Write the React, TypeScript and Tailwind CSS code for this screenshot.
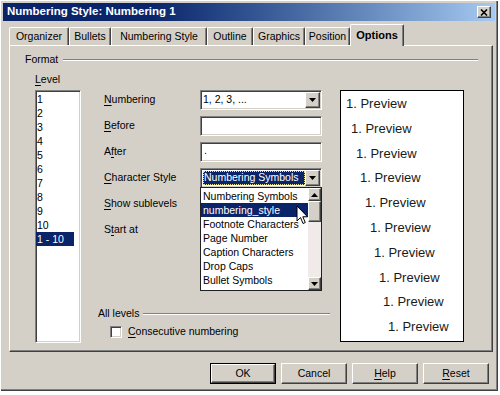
type MnProps = { a?: string; u: string; b?: string };

function Mn({ a = "", u, b = "" }: MnProps) {
  return (
    <span className="whitespace-nowrap">
      {a}
      <span className="underline underline-offset-[2px]">{u}</span>
      {b}
    </span>
  );
}

const raised =
  "bg-[#d4d0c8] border border-t-white border-l-white border-r-[#404040] border-b-[#404040] shadow-[inset_-1px_-1px_0_#808080]";
const sunken =
  "bg-white border border-t-[#808080] border-l-[#808080] border-r-white border-b-white shadow-[inset_1px_1px_0_#404040,inset_-1px_-1px_0_#d4d0c8]";

function DownTri() {
  return (
    <svg width="7" height="4" viewBox="0 0 7 4">
      <path d="M0 0h7L3.5 4z" fill="#000" />
    </svg>
  );
}

function UpTri() {
  return (
    <svg width="7" height="4" viewBox="0 0 7 4">
      <path d="M0 4h7L3.5 0z" fill="#000" />
    </svg>
  );
}

const tabs = [
  { label: "Organizer", w: "w-[60px]" },
  { label: "Bullets", w: "w-[42px]" },
  { label: "Numbering Style", w: "w-[96px]" },
  { label: "Outline", w: "w-[46px]" },
  { label: "Graphics", w: "w-[52px]" },
  { label: "Position", w: "w-[45px]" },
];

const levels = ["1", "2", "3", "4", "5", "6", "7", "8", "9", "10"];

const previewIndent = [
  "pl-[5px]",
  "pl-[10px]",
  "pl-[15px]",
  "pl-[19px]",
  "pl-[24px]",
  "pl-[29px]",
  "pl-[33px]",
  "pl-[38px]",
  "pl-[42px]",
  "pl-[47px]",
];

const charStyles = [
  "Numbering Symbols",
  "numbering_style",
  "Footnote Characters",
  "Page Number",
  "Caption Characters",
  "Drop Caps",
  "Bullet Symbols",
];

function Combo({ children }: { children: React.ReactNode }) {
  return (
    <div className={`w-[122px] h-[20px] flex items-center ${sunken}`}>
      <div className="flex-1 h-full flex items-center pl-[2px] overflow-hidden">{children}</div>
      <div className={`w-[15px] h-[16px] mr-[1px] flex items-center justify-center ${raised}`}>
        <DownTri />
      </div>
    </div>
  );
}

function Field({ children }: { children?: React.ReactNode }) {
  return <div className={`w-[122px] h-[20px] flex items-end pl-[3px] pb-[2px] ${sunken}`}>{children}</div>;
}

function Cursor() {
  return (
    <svg width="13" height="21" viewBox="0 0 13 21" className="absolute left-[95px] top-[17px]">
      <path
        d="M1 1 L1 16 L4.5 12.5 L7 18.5 L9.3 17.5 L6.8 11.8 L11.5 11.8 Z"
        fill="#fff"
        stroke="#000"
        strokeWidth="1"
        strokeLinejoin="miter"
      />
    </svg>
  );
}

export default function App() {
  return (
    <div className="w-[500px] h-[395px] bg-white font-['Liberation_Sans',Arial,sans-serif] text-[10.5px] text-black">
      <div className="w-[498px] h-[391px] bg-[#d4d0c8] flex flex-col shadow-[inset_1px_1px_0_#ffffff,inset_-1px_-1px_0_#404040,inset_-2px_-2px_0_#808080]">
        {/* title bar */}
        <div className="mx-[3px] mt-[3px] h-[18px] flex items-center bg-linear-to-r from-[#0a246a] from-30% to-[#a6caf0] pl-[4px] pr-[4px]">
          <span className="flex-1 text-white font-bold text-[11.5px]">Numbering Style: Numbering 1</span>
          <div className={`w-[14px] h-[12px] flex items-center justify-center ${raised}`}>
            <svg width="8" height="7" viewBox="0 0 8 7">
              <path d="M1 0.5 L7 6.5 M7 0.5 L1 6.5" stroke="#000" strokeWidth="1.6" />
            </svg>
          </div>
        </div>

        {/* tabs */}
        <div className="ml-[9px] mt-[3px] h-[21px] flex items-end">
          {tabs.map((t) => (
            <div
              key={t.label}
              className={`${t.w} h-[18px] flex items-center justify-center border-t border-l border-r border-t-white border-l-white border-r-[#404040] rounded-t-[2px] shadow-[inset_-1px_0_0_#808080]`}
            >
              {t.label}
            </div>
          ))}
          <div className="w-[54px] h-[22px] -mb-px relative z-10 bg-[#d4d0c8] flex items-center justify-center font-bold text-[11px] border-t border-l border-r border-t-white border-l-white border-r-[#404040] rounded-t-[2px] shadow-[inset_-1px_0_0_#808080]">
            Options
          </div>
        </div>

        {/* panel */}
        <div className="ml-[9px] w-[484px] h-[307px] flex flex-col border border-t-white border-l-white border-r-[#404040] border-b-[#404040] shadow-[inset_-1px_-1px_0_#808080]">
          <div className="mt-[7px] h-[14px] flex items-center pl-[15px] pr-[14px]">
            <span>Format</span>
            <div className="flex-1 ml-[5px] border-t border-t-[#808080] border-b border-b-white" />
          </div>

          <div className="flex">
            {/* level column */}
            <div className="ml-[25px] w-[46px] flex flex-col">
              <div className="mt-[6px] h-[14px] flex items-center">
                <Mn u="L" b="evel" />
              </div>
              <div className={`mt-[3px] h-[253px] pt-[1px] ${sunken}`}>
                {levels.map((l) => (
                  <div key={l} className="h-[14px] leading-[14px] pl-[1px]">
                    {l}
                  </div>
                ))}
                <div className="h-[14px] leading-[14px] pl-[1px] w-[38px] bg-[#0a246a] text-white">1 - 10</div>
              </div>
            </div>

            {/* settings column */}
            <div className="ml-[17px] w-[232px] pt-[20px] flex flex-col">
              <div className="h-[26px] flex items-center pl-[6px]">
                <div className="w-[96px]">
                  <Mn u="N" b="umbering" />
                </div>
                <Combo>1, 2, 3, ...</Combo>
              </div>
              <div className="h-[26px] flex items-center pl-[6px]">
                <div className="w-[96px]">
                  <Mn u="B" b="efore" />
                </div>
                <Field />
              </div>
              <div className="h-[26px] flex items-center pl-[6px]">
                <div className="w-[96px]">
                  <Mn a="A" u="f" b="ter" />
                </div>
                <Field>.</Field>
              </div>
              <div className="h-[26px] flex items-center pl-[6px]">
                <div className="w-[96px]">
                  <Mn u="C" b="haracter Style" />
                </div>
                <div className="relative">
                  <Combo>
                    <div className="w-full h-[14px] flex items-center bg-[#0a246a] text-white pl-[1px] outline-1 outline-dotted outline-[#e8e4a0] -outline-offset-1">
                      Numbering Symbols
                    </div>
                  </Combo>
                  <div className="absolute left-0 top-[19px] z-20 w-[122px] h-[104px] bg-white border border-[#202020] flex">
                    <div className="flex-1 pt-[1px]">
                      {charStyles.map((s, i) => (
                        <div
                          key={s}
                          className={
                            i === 1
                              ? "h-[14px] leading-[14px] pl-[2px] bg-[#0a246a] text-white"
                              : "h-[14px] leading-[14px] pl-[2px]"
                          }
                        >
                          {s}
                        </div>
                      ))}
                    </div>
                    <div className="w-[13px] flex flex-col bg-[#f0ebe8]">
                      <div className={`h-[13px] flex items-center justify-center ${raised}`}>
                        <UpTri />
                      </div>
                      <div className={`h-[21px] ${raised}`} />
                      <div className="flex-1" />
                      <div className={`h-[13px] flex items-center justify-center ${raised}`}>
                        <DownTri />
                      </div>
                    </div>
                    <Cursor />
                  </div>
                </div>
              </div>
              <div className="h-[26px] flex items-center pl-[6px]">
                <div className="w-[96px]">
                  <Mn u="S" b="how sublevels" />
                </div>
              </div>
              <div className="h-[26px] flex items-center pl-[6px]">
                <div className="w-[96px]">
                  <Mn a="S" u="t" b="art at" />
                </div>
              </div>

              <div className="mt-[64px] h-[14px] flex items-center">
                <span>All levels</span>
                <div className="flex-1 ml-[4px] border-t border-t-[#808080] border-b border-b-white" />
              </div>
              <div className="mt-[4px] h-[14px] pl-[12px] flex items-center">
                <div className={`w-[12px] h-[12px] ${sunken}`} />
                <span className="ml-[6px]">
                  <Mn u="C" b="onsecutive numbering" />
                </span>
              </div>
            </div>

            {/* preview */}
            <div className="ml-[10px] mt-[23px] w-[124px] h-[252px] bg-white border border-black pt-[1px] text-[13px] text-[#1a1a1a]">
              {previewIndent.map((p, i) => (
                <div key={i} className={`h-[24.8px] leading-[24.8px] ${p}`}>
                  1. Preview
                </div>
              ))}
            </div>
          </div>
        </div>

        {/* buttons */}
        <div className="mt-[11px] flex justify-end gap-[5px] pr-[9px]">
          <div className="w-[66px] h-[21px] border border-black">
            <div className={`w-full h-full flex items-center justify-center ${raised}`}>OK</div>
          </div>
          <div className={`w-[66px] h-[21px] flex items-center justify-center ${raised}`}>Cancel</div>
          <div className={`w-[66px] h-[21px] flex items-center justify-center ${raised}`}>
            <Mn u="H" b="elp" />
          </div>
          <div className={`w-[66px] h-[21px] flex items-center justify-center ${raised}`}>
            <Mn u="R" b="eset" />
          </div>
        </div>
      </div>
    </div>
  );
}
